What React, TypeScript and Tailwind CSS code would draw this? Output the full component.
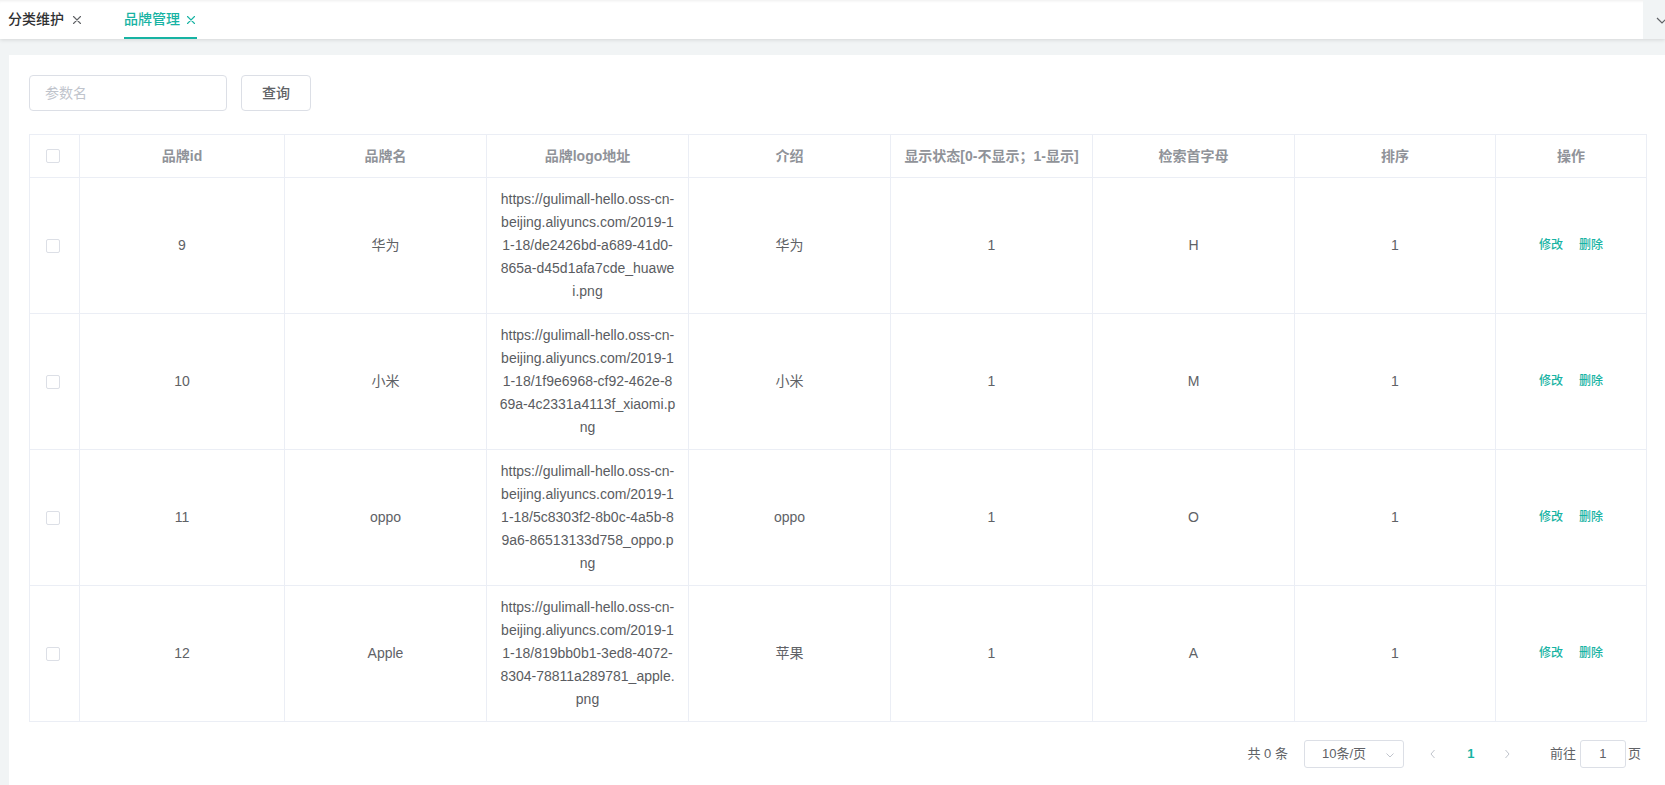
import React from "react";

const TEAL = "#17b3a3";

type Row = {
  id: string;
  name: string;
  url: string[];
  desc: string;
  show: string;
  letter: string;
  sort: string;
};

const rows: Row[] = [
  {
    id: "9",
    name: "华为",
    url: [
      "https://gulimall-hello.oss-cn-",
      "beijing.aliyuncs.com/2019-1",
      "1-18/de2426bd-a689-41d0-",
      "865a-d45d1afa7cde_huawe",
      "i.png",
    ],
    desc: "华为",
    show: "1",
    letter: "H",
    sort: "1",
  },
  {
    id: "10",
    name: "小米",
    url: [
      "https://gulimall-hello.oss-cn-",
      "beijing.aliyuncs.com/2019-1",
      "1-18/1f9e6968-cf92-462e-8",
      "69a-4c2331a4113f_xiaomi.p",
      "ng",
    ],
    desc: "小米",
    show: "1",
    letter: "M",
    sort: "1",
  },
  {
    id: "11",
    name: "oppo",
    url: [
      "https://gulimall-hello.oss-cn-",
      "beijing.aliyuncs.com/2019-1",
      "1-18/5c8303f2-8b0c-4a5b-8",
      "9a6-86513133d758_oppo.p",
      "ng",
    ],
    desc: "oppo",
    show: "1",
    letter: "O",
    sort: "1",
  },
  {
    id: "12",
    name: "Apple",
    url: [
      "https://gulimall-hello.oss-cn-",
      "beijing.aliyuncs.com/2019-1",
      "1-18/819bb0b1-3ed8-4072-",
      "8304-78811a289781_apple.",
      "png",
    ],
    desc: "苹果",
    show: "1",
    letter: "A",
    sort: "1",
  },
];

const headers = [
  "品牌id",
  "品牌名",
  "品牌logo地址",
  "介绍",
  "显示状态[0-不显示；1-显示]",
  "检索首字母",
  "排序",
  "操作",
];

function CloseIcon({ color }: { color: string }) {
  return (
    <svg width="12" height="12" viewBox="0 0 12 12" fill="none">
      <path d="M2.5 2.5 L9.5 9.5 M9.5 2.5 L2.5 9.5" stroke={color} strokeWidth="1.1" strokeLinecap="round" />
    </svg>
  );
}

function Checkbox() {
  return <span className="inline-block w-[14px] h-[14px] border border-[#dcdfe6] rounded-[2px] bg-white align-middle" />;
}

export default function App() {
  const font = "font-['Liberation_Sans','Noto_Sans_CJK_SC',sans-serif]";
  return (
    <div className={`w-[1665px] h-[785px] overflow-hidden bg-[#f1f4f5] ${font}`}>
      {/* Tabs bar */}
      <div className="relative z-10 h-[39px] bg-white flex shadow-[0_1px_4px_rgba(0,0,0,0.12),inset_0_3px_3px_-2px_rgba(0,0,0,0.07)]">
        <div className="flex-1 flex items-stretch">
          <div className="ml-[8px] flex items-center gap-[7px] text-[14px] text-[#303133] font-medium">
            <span>分类维护</span>
            <CloseIcon color="#606266" />
          </div>
          <div className="relative ml-[41px] flex items-center gap-[5px] text-[14px] font-medium" style={{ color: TEAL }}>
            <span>品牌管理</span>
            <CloseIcon color={TEAL} />
            <span className="absolute left-0 right-0 bottom-0 h-[2px]" style={{ background: TEAL }} />
          </div>
        </div>
        <div className="w-[22px] bg-[#f1f4f5] overflow-hidden flex items-center">
          <svg className="ml-[12px] shrink-0" width="14" height="14" viewBox="0 0 14 14" fill="none">
            <path d="M2 5 L7 10 L12 5" stroke="#606266" strokeWidth="1.2" />
          </svg>
        </div>
      </div>

      {/* Content */}
      <div className="pl-[9px] pt-[16px]">
        <div className="bg-white w-[1656px] h-[740px] pl-[20px] pr-[19px] pt-[20px]">
          {/* Search form */}
          <div className="flex items-center gap-[14px]">
            <div className="w-[198px] h-[36px] border border-[#dcdfe6] rounded-[4px] flex items-center pl-[15px] text-[14px] text-[#c0c4cc]">
              参数名
            </div>
            <div className="w-[70px] h-[36px] border border-[#dcdfe6] rounded-[4px] flex items-center justify-center text-[14px] text-[#606266] font-medium">
              查询
            </div>
          </div>

          {/* Table */}
          <div className="mt-[23px] w-[1617px]">
            <table className="w-[1617px] table-fixed border-collapse">
              <colgroup>
                <col className="w-[50px]" />
                <col className="w-[205px]" />
                <col className="w-[202px]" />
                <col className="w-[202px]" />
                <col className="w-[202px]" />
                <col className="w-[202px]" />
                <col className="w-[202px]" />
                <col className="w-[201px]" />
                <col className="w-[151px]" />
              </colgroup>
              <thead>
                <tr className="h-[43px]">
                  <th className="border border-[#ebeef5] p-0 align-middle">
                    <div className="flex justify-center pr-[4px]">
                      <Checkbox />
                    </div>
                  </th>
                  {headers.map((h) => (
                    <th
                      key={h}
                      className="border border-[#ebeef5] py-[10px] px-[10px] text-[14px] leading-[22px] font-bold text-[#909399] text-center align-middle whitespace-nowrap"
                    >
                      {h}
                    </th>
                  ))}
                </tr>
              </thead>
              <tbody>
                {rows.map((r) => (
                  <tr key={r.id} className="h-[128px]">
                    <td className="border border-[#ebeef5] p-0 align-middle">
                      <div className="flex justify-center pr-[4px]">
                        <Checkbox />
                      </div>
                    </td>
                    <td className="border border-[#ebeef5] px-[10px] py-[10px] text-[14px] leading-[23px] text-[#606266] text-center align-middle">
                      {r.id}
                    </td>
                    <td className="border border-[#ebeef5] px-[10px] py-[10px] text-[14px] leading-[23px] text-[#606266] text-center align-middle">
                      {r.name}
                    </td>
                    <td className="border border-[#ebeef5] px-[4px] py-[10px] text-[14px] leading-[23px] text-[#5a5c61] text-center align-middle">
                      {r.url.map((l, i) => (
                        <div key={i} className="whitespace-nowrap">
                          {l}
                        </div>
                      ))}
                    </td>
                    <td className="border border-[#ebeef5] px-[10px] py-[10px] text-[14px] leading-[23px] text-[#606266] text-center align-middle">
                      {r.desc}
                    </td>
                    <td className="border border-[#ebeef5] px-[10px] py-[10px] text-[14px] leading-[23px] text-[#606266] text-center align-middle">
                      {r.show}
                    </td>
                    <td className="border border-[#ebeef5] px-[10px] py-[10px] text-[14px] leading-[23px] text-[#606266] text-center align-middle">
                      {r.letter}
                    </td>
                    <td className="border border-[#ebeef5] px-[10px] py-[10px] text-[14px] leading-[23px] text-[#606266] text-center align-middle">
                      {r.sort}
                    </td>
                    <td className="border border-[#ebeef5] px-[10px] py-[10px] text-[12px] leading-[23px] text-center align-middle">
                      <div className="flex justify-center gap-[16px] font-medium" style={{ color: TEAL }}>
                        <span>修改</span>
                        <span>删除</span>
                      </div>
                    </td>
                  </tr>
                ))}
              </tbody>
            </table>

            {/* Pagination */}
            <div className="mt-[18px] flex items-center justify-end text-[13px] text-[#606266] h-[28px]">
              <span className="mr-[16px]">共 0 条</span>
              <div className="relative w-[100px] h-[28px] border border-[#dcdfe6] rounded-[3px] flex items-center justify-center pr-[20px]">
                <span>10条/页</span>
                <svg className="absolute right-[8px] top-[9px]" width="10" height="10" viewBox="0 0 10 10" fill="none">
                  <path d="M1.5 3.5 L5 7 L8.5 3.5" stroke="#c0c4cc" strokeWidth="1" />
                </svg>
              </div>
              <div className="ml-[9px] flex items-center">
                <div className="w-[40px] h-[28px] flex items-center justify-center">
                  <svg width="10" height="12" viewBox="0 0 10 12" fill="none">
                    <path d="M6.5 2 L3 6 L6.5 10" stroke="#c0c4cc" strokeWidth="1" />
                  </svg>
                </div>
                <div className="w-[36px] h-[28px] flex items-center justify-center font-bold" style={{ color: TEAL }}>
                  1
                </div>
                <div className="w-[36px] h-[28px] flex items-center justify-center">
                  <svg width="10" height="12" viewBox="0 0 10 12" fill="none">
                    <path d="M3.5 2 L7 6 L3.5 10" stroke="#c0c4cc" strokeWidth="1" />
                  </svg>
                </div>
              </div>
              <span className="ml-[25px]">前往</span>
              <div className="ml-[4px] w-[46px] h-[28px] border border-[#dcdfe6] rounded-[3px] flex items-center justify-center text-[#606266]">
                1
              </div>
              <span className="ml-[2px] mr-[5px]">页</span>
            </div>
          </div>
        </div>
      </div>
    </div>
  );
}
